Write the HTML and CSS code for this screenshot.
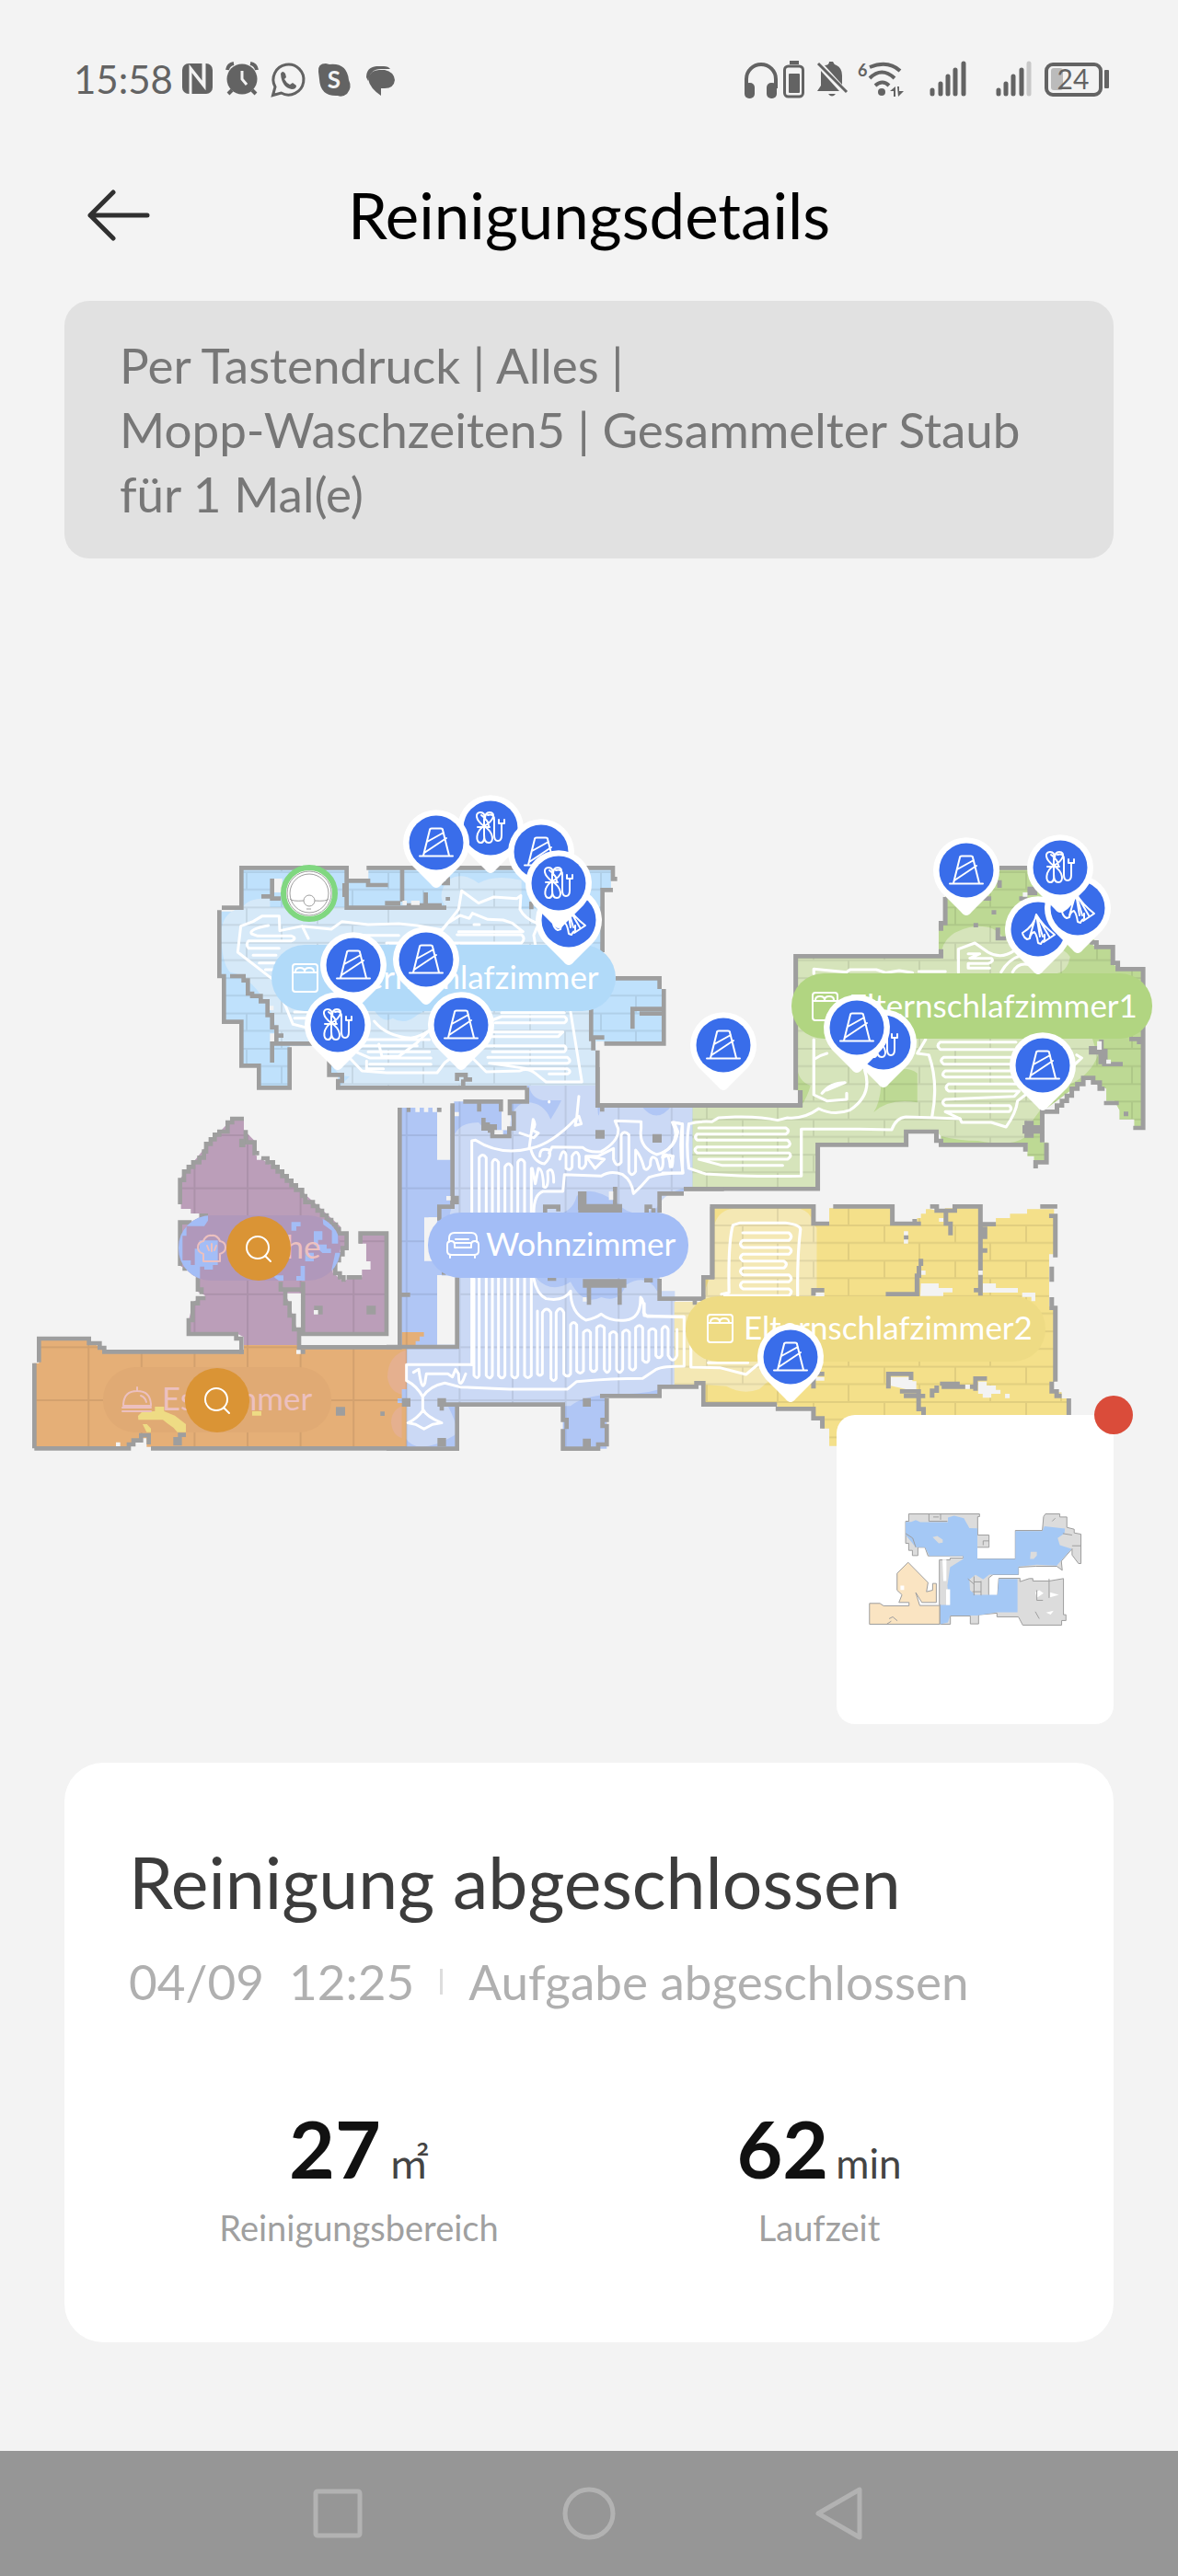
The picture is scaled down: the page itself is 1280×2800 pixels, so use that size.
FILE: index.html
```html
<!DOCTYPE html>
<html lang="de">

<head>
  <meta charset="UTF-8">
  <meta name="viewport" content="width=device-width, initial-scale=1">
  <title>Reinigungsdetails</title>
  <link rel="stylesheet" href="styles.css">
</head>

<body>
  <div class="status-bar">
    <span class="clock">15:58</span>
    <svg class="status-icons" width="236" height="44" viewBox="196 64 236 44">
      <!-- nfc -->
      <rect x="198" y="69" width="33" height="33" rx="7" />
      <path class="cut" d="M207 103V74L221 92V69M208 76L222 94V68" />
      <!-- alarm -->
      <circle cx="263" cy="86" r="16.5" />
      <path class="line" d="M247 76q1-6 7-7M279 76q-1-6-7-7M252 98l-4 4M274 98l4 4" />
      <path class="cut" d="M263 77v9l5 6" />
      <!-- whatsapp -->
      <path class="line thin" d="M296.500 103.500l2.500-9a16.500 16.500 0 1 1 6.500 6.500z" />
      <path d="M305 80q2-4 5 0l1 4-2 2q2 4 6 6l3-2 4 3q0 4-5 4-11-2-12-17z" />
      <!-- skype -->
      <path d="M346 78q-1-9 8-9l4 1q19-2 21 17 4 8-2 15-5 4-10 2-19 1-20-18z" />
      <text class="skype-s" x="363" y="96" text-anchor="middle">S</text>
      <!-- chat -->
      <path d="M398 84q0-11 11-12h8q5 0 7 3h-10q-12 0-14 13z" />
      <path d="M400 86q2-10 12-10h6q10 2 11 11-1 9-11 9h-4v8q-12-8-14-18z" />
    </svg>
    <svg class="status-icons status-right" width="400" height="44" viewBox="808 64 400 44">
      <!-- headphones -->
      <path class="line" d="M811 96V86a16 16 0 0 1 32 0v10" />
      <rect x="809" y="90" width="11" height="17" rx="5" />
      <rect x="833" y="90" width="11" height="17" rx="5" />
      <rect class="line thin" x="852.500" y="72" width="20" height="33" rx="4" />
      <rect x="857" y="80" width="12" height="21" rx="1" />
      <rect x="858" y="66" width="10" height="4" />
      <!-- muted bell -->
      <path d="M888 99l4-6V77l20 22zM896 71q5 0 5-4h4q1 3 4 4 6 3 6 11v10zM900 102h8q-4 5-8 0z" />
      <path class="line thin" d="M889 69l31 31" />
      <!-- wifi -->
      <text class="wifi-6" x="932" y="83">6</text>
      <path class="line" d="M945 73q20-8 33 4M945 85q13-13 27 0M951 93q8-7 15 0" />
      <circle cx="958" cy="100" r="4" />
      <path d="M967 99l6-5v11h-2v-6zM975 94h2v5h5l-6 6z" />
      <!-- signal 1 -->
      <path class="bars" d="M1013 98v4M1022 91v11M1030 83v19M1038 76v26M1047 69v33" />
      <!-- signal 2 -->
      <path class="bars" d="M1085 98v4M1093 91v11M1101 83v19M1110 76v26" />
      <path class="bars faint" d="M1118 69v33" />
      <!-- battery -->
      <rect class="charge" x="1142" y="74" width="13" height="24" rx="3" />
      <rect class="line" x="1137" y="70" width="59" height="33" rx="7" />
      <rect x="1200" y="76" width="5" height="20" rx="1" />
      <text class="battery-text" x="1166" y="97" text-anchor="middle">24</text>
    </svg>
  </div>

  <header class="header">
    <button class="back" type="button" aria-label="Zurück">
      <svg width="70" height="56" viewBox="94 206 70 56">
        <path d="M160 234L98 234M123 209L98 234l25 25" />
      </svg>
    </button>
    <h1>Reinigungsdetails</h1>
  </header>

  <main>
    <p class="note">Per Tastendruck | Alles |<br>Mopp-Waschzeiten5 | Gesammelter Staub<br>für 1 Mal(e)</p>

    <section class="map-area">
      <svg class="map" viewBox="0 607 1280 1309">
        <defs>
          <pattern id="bricks" x="36" y="947" width="77" height="38.400" patternUnits="userSpaceOnUse">
            <path class="joint" d="M0 1H77M0 20H77M1 0V19M39 20V39" />
          </pattern>
          <pattern id="tiles" x="268" y="1233" width="57.600" height="57.600" patternUnits="userSpaceOnUse">
            <path class="joint" d="M1 0V58M0 1H58" />
          </pattern>
          <clipPath id="clip-bricks">
            <use href="#floor-blue" transform="translate(220 860) scale(.3333)" />
            <use href="#floor-green" transform="translate(720 860) scale(.3571 .3333)" />
            <use href="#floor-yellow" transform="translate(700 1250) scale(.3571 .3333)" />
          </clipPath>
          <clipPath id="clip-tiles">
            <use href="#floor-living" transform="translate(420 1160) scale(.3333)" />
            <use href="#floor-kitchen" transform="translate(20 1180) scale(.3333)" />
            <use href="#floor-dining" transform="translate(20 1180) scale(.3333)" />
          </clipPath>
          <clipPath id="clip-kitchen-label">
            <rect x="194" y="1321" width="176" height="71" rx="35" />
          </clipPath>
          <g id="pin">
            <path class="pin-back" d="M0 49q-3 0-6-4L-27 24A36 36 0 1 1 27 24L6 45q-3 4-6 4z" />
            <circle class="pin-face" r="29.500" />
          </g>
          <g id="cone">
            <use href="#pin" />
            <path class="glyph" d="M-18 14.500H18M-14 14L-7-14q0-1.500 2-1.500H5q2 0 2 1.500L14 14M-10-1L8-11M-13 11L11-5" />
          </g>
          <g id="cable">
            <use href="#pin" />
            <path class="glyph" d="M-7-2C-17-9-17-17-11-17q5 0 5 7 0-7 5-7c7 0 5 9-6 15C-17 4-16 16-11 16q5 0 4-9 0 9 5 9c6 0 6-11-5-18M-14-1H-1M-10-14q8 6 8 12M-7-10V7M-3-14q7-2 7 5V8q0 6 4 6t4-6V-4M9-5h6M9-5v-4M15-5v-4" />
          </g>
          <g id="tent">
            <use href="#pin" />
            <path class="glyph" d="M-2-16Q-4-4-17 4q1 5 5 7l3-1q1-6 5-7 3 4 4 12l3 1Q6 10 6 14l12-8Q5-4-2-16zM-2-16L-9 8M-2-16L2 8M-2-16L5 8M-2-16L12 8M7 6v5" />
          </g>
          <g id="bed">
            <rect class="glyph" width="27" height="30" rx="3" />
            <path class="glyph" d="M0 9H27M3 8q0-4 5-4t5 4q0-4 5-4t5 4" />
          </g>
          <g id="search">
            <circle class="search-face" r="35" />
            <circle class="search-glass" cx="-1" cy="-1" r="12" />
            <path class="search-glass" d="M7 8l6 6" />
          </g>
        </defs>

        <!-- floors -->
        <g transform="translate(220 860) scale(.3333)">
          <path id="floor-blue" class="blue" d="M127 250H470V292H541V250H1332V322H1304V610H1490V645H1504V823H1310V815H1282V960H442V920H413V830H284V967H184V895H127V750H70V603H55V392H127z" />
          <path class="blue-clean" d="M62 450Q70 390 130 380Q150 345 220 350V378H795Q760 340 800 290Q850 260 900 300Q950 270 1040 290V385H1090Q1110 480 1190 520H1260V810H1282V960H820L850 935L880 960H450L480 930Q430 930 413 870V823H245Q240 730 200 680Q150 600 90 590Q60 560 62 450z" />
          <path class="blue" d="M560 715Q590 760 620 740Q660 765 700 730L735 712z" />
        </g>
        <g transform="translate(720 860) scale(.3571 .3333)">
          <path id="floor-green" class="green" d="M90 1030H419V975H405V538H840V430H860V250H1230V420L1320 490V508H1370V560L1385 580H1462V1098H1435V1070H1390V1040L1375 1010H1350V970L1325 960L1300 930L1155 1045V1145H1172V1210H1130V1190H1110V1150H847V1110H741V1153H472V1297H90z" />
          <path class="green-clean" d="M90 1030H419Q440 1000 450 960Q400 940 412 870V545H845Q850 450 960 440Q1020 440 1040 485Q1200 480 1240 540Q1230 600 1180 595H1260Q1300 800 1325 860Q1300 930 1230 960Q1130 1040 1100 1130Q1060 1160 960 1140Q900 1140 847 1125L835 1110H741V1153H472V1290H90z" />
          <path class="green" d="M665 960Q660 1020 642 1047Q690 1000 775 1015V920Q760 905 730 905z" />
        </g>
        <g transform="translate(420 1160) scale(.3333)">
          <path id="floor-living" class="living" d="M43 132H165V302H208V125H220V112H375V205H405V112H458V60H688V125H997V390H969V412H890V755H940V1035H890V1072H718V1244H575V1100H230V1244H50V910H43zM123 490V632H165V490zM165 678V905H230V678z" />
          <path class="living-clean" d="M465 60H688V125Q690 190 697 125H830Q880 190 930 125H997V390Q910 400 880 460Q800 500 750 440Q660 380 620 420Q600 500 490 475V690Q540 740 600 700Q640 780 700 750Q760 770 780 710Q850 670 882 730H940V1035Q850 1070 750 1065Q640 1070 600 1105H200Q240 1180 222 1200Q100 1270 62 1210L65 920H230V680H180V600L215 440V250Q220 180 300 180Q340 230 400 220Q400 130 450 115Q510 110 535 170Q560 130 570 108H510Q470 100 465 60z" />
        </g>
        <g transform="translate(700 1250) scale(.3571 .3333)">
          <path id="floor-yellow" class="yellow" d="M207 184H515V240H563V190H755V240H830V222H842V208H857V193H872L915 205V190H1025V240L1070 237V222H1113V208H1165V193H1247V340H1232V510H1250V755H1240V790H1270V810H1290V965H563V908H540V870H515V840H405V830H180V765H92V495H180V415H207z" />
          <path class="yellow-clean" d="M214 240Q230 195 270 192H475Q505 200 512 235L525 255V470H545V700Q430 700 350 780Q300 800 250 770L180 765H92V495H180Q185 430 214 400z" />
        </g>
        <g transform="translate(20 1180) scale(.3333)">
          <path id="floor-kitchen" class="kitchen" d="M697 108H735V145L770 180V225L850 275L930 350L1050 460V480H1070V530H1050L1025 570V610L1060 640L1080 625H1120V600H1148V573H1134V515H1110V480H1195V810H915V850H735V820L715 810H555V765L570 705L610 685L580 670V600L530 590V446H590V417H562V402H530V300L610 200z" />
          <path id="floor-dining" class="dining" d="M67 825H225L285 868H735V846H915V855H1265V1180H50V905H67z" />
          <path class="dining-clean" d="M1265 862Q1205 880 1203 950Q1210 1005 1265 1010zM1250 1045Q1215 1060 1215 1100Q1220 1140 1250 1150z" />
          <path class="living" d="M1250 990H1266V1035H1236V1020H1250z" />
          <path class="dining" d="M1250 804H1322V818H1308V833H1295V846H1250z" />
        </g>
        <rect fill="url(#bricks)" clip-path="url(#clip-bricks)" x="200" y="930" width="1080" height="650" />
        <rect fill="url(#tiles)" clip-path="url(#clip-tiles)" x="20" y="1170" width="760" height="410" />

        <!-- holes, walls and the driven route -->
        <g transform="translate(220 860) scale(.3333)">
          <path class="gap" d="M232 285h28v45h-28zM220 790h14v28h-14zM218 700h14v14h-14z" />
          <path class="wall" d="M63 380H127V250H470V380H795M535 250H1338V286H1352M1338 322H1304V525M470 292H540V306H605M651 250V360M595 365H645M665 372H780M728 330V365M800 280V300H780M55 388V603H70V752H127V895H184V967H284V835M90 603H134V617H148V660H162V668H190V685H212V705V730H227V770H241V830M241 797H264M220 823H360M227 830V885M413 870V925H455V945H442V967H1058M227 285V343H192M220 350H255M463 300V345M1347 610H1490V645M1504 645V823H1310M1402 775V710H1500M1425 725H1500M1267 710V815M1260 803H1310M1274 810V845M1288 845V1024H1560M830 945V925H858V940H879M850 940V970M800 345V357M1072 360V385" />
          <path class="gap" d="M652 357h14v14h-14zM680 357h28v14h-28z" />
          <path class="route" d="M335 770L295 760L250 650M225 610L115 525L125 440L165 425L195 407H250L252 455L325 440L420 450L455 425L540 435L640 432L700 438L780 452Q800 430 835 385L845 325L900 365L950 345L1025 350L1038 340L1035 385Q1050 415 1090 430M780 455L800 430L840 405L870 415L880 398L930 418L980 420L1010 430L1045 458H835M325 440L345 480" />
          <path class="route" d="M215 438Q150 450 160 465L180 472H290Q310 480 290 488H150Q140 500 150 512H250M165 535H240M185 560H235M205 582H230M830 468H1040Q1055 480 1040 495H600M1085 500L1080 470L1090 445M525 470H640M885 435h18" />
          <path class="route" d="M1200 720L1237 948H1120L1085 920Q1060 900 1035 912L925 915Q900 890 880 870M975 722H1180M935 750L975 735H1180Q1195 745 1180 755H955M950 785H1175L1160 800H930M900 830H1180Q1190 840 1180 850H945M930 868H1190Q1205 880 1190 887H935L1060 905H1190Q1205 915 1190 922H1130" />
          <path class="route" d="M480 870L520 912L600 918H765L790 885L810 870M520 810H740M560 750Q600 800 680 805Q710 800 740 780M515 830H700M540 850H740M575 825L585 865H640L700 820L740 780M500 850L545 870H745M535 880V905H590M545 890H745M300 720H350M300 740H340" />
        </g>
        <g transform="translate(720 860) scale(.3571 .3333)">
          <path class="gap" d="M1310 490h14v14h-14z" />
          <path class="wall" d="M405 974V538H847V515M847 455V430H860V345M1025 250H1110M419 975V1024H0M65 1297H472V1153H741V1110H833V1140H847V1153H1104V1175M1155 1145V1045H1200V1025H1215V1010H1230V993H1245V970H1262V955H1280V935H1310V950H1330V970H1345M1350 1010V1017H1388M1410 1045V1060M1168 1147V1210H1135V1230M1300 493H1320V508H1370V560H1385V580H1462V1098H1432M1020 445V480H1045M1025 290V315M975 350H1000M1085 350H1110M1008 388v14M953 430v14M1337 890H1400M1335 810V870M1420 808H1450V825" />
          <path class="wall wide" d="M1095 1103H1155M1115 1075V1130M1110 325H1140M1297 845H1330M1340 840V890" />
          <path class="gap" d="M1322 815h14v28h-14zM1350 875h14v14h-14zM1096 330h14v14h-14z" />
          <path class="route" d="M110 1098H375Q390 1108 375 1118H105Q95 1128 105 1138H380Q395 1150 380 1160H105Q92 1170 105 1180H385Q395 1190 380 1200H110L180 1220H365M80 1085Q70 1150 80 1230L130 1248Q260 1258 422 1255V1102H600L697 1104Q710 1065 740 1062L905 1068L910 1080L1000 1080L1045 1095Q1075 1050 1080 1010L1110 985M80 1085Q110 1075 150 1078L170 1065L220 1062Q300 1060 350 1073L380 1065Q430 1070 475 1035Q520 1060 570 1040Q640 990 615 910" />
          <path class="route" d="M460 595V580L560 590L570 582H650L680 592L720 585L760 592M780 588H860M460 810V990L500 1010L560 1005V985M485 985Q510 950 555 950L500 975M460 875Q480 860 500 855M900 590V515L950 495L990 525Q1030 550 1070 520M930 530H965L935 545H1000Q1010 555 990 562H930V577H995M1030 590Q1050 550 1090 535M1065 590Q1080 560 1110 565" />
          <path class="route" d="M1075 818H845Q830 830 845 842H1070M1070 868H855Q840 878 855 890H1060M1065 912H860Q845 925 860 932H1075M1080 955H870Q855 965 870 978H1085L1070 995L860 1005Q845 1015 860 1025H1055Q1065 1035 1055 1045H860L905 1068M820 1060Q840 950 810 860L775 855L800 810M1260 860L1275 870L1255 890M30 1080L60 1085Q50 1160 62 1245H0M30 1080Q60 1140 0 1180M0 1195Q40 1170 28 1225" />
        </g>
        <g transform="translate(420 1160) scale(.3333)">
          <path class="gap" d="M375 145h28v60h-28zM94 132h14v14h-14zM122 132h14v14h-14zM150 132h14v14h-14z" />
          <path class="wall" d="M458 67V112H402V150H415V200H400V225H345V205M43 132V910M215 118V455H172V500M250 112H373V145M302 112V145M316 165V200H330V180M688 0V125H1348V75M703 130v15M66 139h12M165 139h14M890 475V412H969M969 397H1100M890 690V755H1033V685H1062V455M1005 755v20M696 1072H890V1042H1010V1030H1033V1100H1270M718 1080V1150H704V1170H718V1230H690V1244H575V1180M587 1180V1150H575V1100H180V1120M230 1100V1244H0M0 912H230V685M50 742H77M745 390V460M517 475V455H560V470M848 475V455H866M870 460V475M660 710V775M760 710V775M525 690h28M840 695h28M180 670h14" />
          <path class="wall wide" d="M638 405V465M625 460H768M640 705H782M640 1093h26M166 1093h28M50 1093h28M166 1223h28M640 1225h26M208 433h28M681 219h30M867 232h30M330 200H360" />
          <path class="gap" d="M137 490h28v115h-28zM725 405h14v28h-14zM640 750h12v14h-12zM195 420h14v14h-14zM222 146h14v14h-14zM352 205h28v14h-28z" />
          <path class="route" d="M278 970V240L290 238Q370 290 470 265M285 690V1005Q296 1020 302 1005V295Q313 278 325 295V1005Q336 1022 345 1005V310Q353 292 365 310V1005Q378 1022 386 1005V325Q398 305 408 325V1005Q418 1022 428 1005V310Q438 292 450 310V1005Q460 1020 472 1005V330" />
          <path class="route" d="M492 795V1000Q500 1010 508 1000V800Q522 778 536 800V1015Q545 1030 553 1015V800Q566 775 578 800V1000Q590 1015 600 1000V840Q610 825 620 840V990Q632 1005 642 990V865Q655 850 665 865V985Q675 1000 685 985V850Q697 835 710 850V985Q720 1005 728 985V870Q740 855 750 870V985Q760 1005 770 985V865Q782 850 792 865V980Q803 995 812 980V850Q825 835 835 850V955Q848 970 855 955V860Q868 845 878 860V940Q888 955 898 940V855Q908 835 918 855V940Q935 970 947 940V855" />
          <path class="route" d="M480 690Q490 740 520 755Q580 765 600 730Q600 800 650 825Q680 820 700 805Q730 830 780 825Q830 820 828 750Q840 760 838 800L850 813H970V975Q900 975 880 985L835 1015Q740 1015 620 1025L590 1050H400L240 1043L190 1030Q140 1040 118 1075V1120Q100 1145 70 1160L95 1165L122 1180L150 1165L180 1160Q130 1140 118 1115M118 1075Q100 1040 65 1022V970H280M88 995L105 985Q115 1060 125 1030L130 1000H200L215 1010L225 985L235 1000Q235 1050 250 1020L258 1000" />
          <path class="route" d="M470 265Q540 250 620 165L627 95M620 165L615 190L635 185L627 160M465 265L478 170Q490 190 475 205L495 215L480 230L435 215M470 265Q480 310 515 315Q540 290 530 270Q500 260 500 290M530 280L540 260L640 262Q660 280 700 275Q760 240 755 200L745 175L830 178V200Q820 260 880 285Q940 270 950 210L937 180L965 185V345Q890 345 855 360Q830 390 805 412Q800 370 770 350Q730 335 700 355L580 350L575 405L510 405Q480 415 480 475M530 112v2" />
          <path class="route" d="M565 300Q575 260 585 285V330Q600 340 605 325V290Q620 265 628 290V325Q640 340 650 315V290L680 330L710 300L650 290L690 290L740 265V300Q750 330 765 310V220Q775 205 790 220V340Q800 360 812 340V270Q830 290 840 330Q850 340 860 320Q860 280 880 300L890 335Q905 335 900 290Q920 270 925 325L935 290M475 330L485 380L495 330Q510 330 512 390Q530 400 525 340Q545 320 545 375" />
        </g>
        <g transform="translate(700 1250) scale(.3571 .3333)">
          <path class="gap" d="M790 265h13v40h-13zM842 435h54v15h42v14h-28v12h-70zM1030 435h40v15h67v15h53v28h-12v-14h-28v-14h-120zM750 740h66v14h12v25l-14 14-20-14-44-10zM1016 755h26v13h28v14h14v13h-28v13h-26v-13h-14zM843 393h13v14h-13zM1098 795h14v14h-14zM520 465h28v12h-28zM520 740h28v12h-28zM897 222h14v12h-14z" />
          <path class="wall" d="M207 420V184H515V240H563M575 184H755V240H842M823 225V240M870 184H890V198H945V184H1023V475M918 205V240H932V278M1205 184H1257M1232 215H1251V350M1240 380V430M1240 480V515H1251V755M1240 755V787H1255V802H1270M1292 810V870M1030 242H1070M1037 250V290M1037 320v15M842 355V378M836 378V410H830V470H735M515 475V457H548M1003 457H1020M743 778V730H812V750M515 730H548M515 740V778M778 787H835V845H850V870M790 802H855M876 808V785H890V768M900 762H960M905 772H977M990 772H1008V745H1043M1008 745V785M797 278v14M400 844H515V875H542V908M404 830H180" />
          <path class="gap" d="M1017 393h13v14h-13zM977 765h14v14h-14z" />
          <path class="route" d="M235 470L258 465Q255 300 270 245L290 238H430Q480 245 475 262Q465 350 467 475M300 270H440Q455 282 440 295H300Q285 305 300 318H440Q455 328 440 340H300Q285 350 300 362H425Q440 372 425 385H300Q285 395 300 407H440Q455 420 440 430H300Q285 440 300 453H440Q455 462 440 475H245M0 500V540L120 545M142 640V708L230 710L310 732L345 700M195 694H315" />
        </g>
        <g transform="translate(20 1180) scale(.3333)">
          <path class="gap" d="M876 677h45v112h-15l-12-40-10-40-8-15zM360 1190v-20l45-20h13v28h14v20h-72zM318 1163h14v13h-14z" />
          <path class="wall" d="M527 387V308H540V280H555V265H570V250H590V235H605V215H612V190H627V175H640V160H655V150H682V120H697V108H735M741 145V185H770V220H785M792 237H812V250H830V265H845V280H860V295H875V310H890V325H905V340H925V360H935V380H960V393H975V408H990V423H1005V438H1020V453H1035V468H1045V482H1070V530H1057V550H1045V570H1033V612H1048V625H1060V640M1070 625H1120M1115 515V482H1200V810H928V640M855 640V665H930M870 665V710H884V750H898V795H915V868M727 875V825H710V810H555V765H568V710H585V693H610M597 680V665H585V625M590 424H618M565 446H527V588M535 597H550" />
          <path class="wall" d="M52 1183V905M67 902V825H230V840H265V855H280V868H735M52 1183H360V1170H375V1157H400V1140H425V1170M432 1183H1265M915 853H1250M1180 1070h14M546 1139H520M921 868H935" />
          <path class="wall wide" d="M1035 1062h30M964 732h28M1135 732h30M505 1160h28M720 187h20" />
          <path class="gap" d="M963 732h14v14h-14zM777 230h14v12h-14zM906 862h14v13h-14z" />
        </g>

        <!-- room labels -->
        <rect class="label-blue" x="295" y="1027" width="374" height="72" rx="36" />
        <use href="#bed" x="318" y="1048" />
        <text class="room" x="357" y="1075">Elternschlafzimmer</text>

        <rect class="label-green" x="860" y="1058" width="392" height="71" rx="35" />
        <use href="#bed" x="883" y="1079" />
        <text class="room" x="922" y="1106">Elternschlafzimmer1</text>

        <rect class="label-yellow" x="745" y="1409" width="391" height="71" rx="35" />
        <use href="#bed" x="769" y="1429" />
        <text class="room" x="808" y="1456">Elternschlafzimmer2</text>

        <rect class="label-living" x="465" y="1318" width="283" height="71" rx="35" />
        <path class="glyph" d="M488 1350v-4q0-6 6-6h18q6 0 6 6v4M491 1364q-5 0-5-4v-7q0-4 4-4t4 4v3h18v-3q0-4 4-4t4 4v7q0 4-5 4zM495 1347h14M494 1351h18M489 1365v2M516 1365v2" />
        <text class="room" x="528" y="1365">Wohnzimmer</text>

        <rect class="label-kitchen" x="194" y="1321" width="176" height="71" rx="35" />
        <g clip-path="url(#clip-kitchen-label)">
          <path class="label-living" transform="translate(20 1180) scale(.3333)" d="M522 420H618V440L606 458H548V490H535V570H562V585H575V532H590V505H650V585H634V600H606V590H592V636H522zM890 445h30v14h-14v14h-16zM963 475h28v28h-14v15h28v14h14v14h-28l-28-28zM935 545h28v28h-28zM835 619h29v17h-15l-14-10zM920 588h14v48h-28v-15h14zM992 435h50v80h-20v-42l-28-20zM1033 545h20v90h-60l27-30z" />
        </g>
        <path class="glyph pink" d="M221 1371v-8q-6-2-6-7 0-6 6-7 3-7 9-6 6-1 9 6 6 1 6 7 0 5-6 7v8zM225 1354l2 5M230 1352v8M235 1354l-2 5" />
        <text class="room pink-text" x="252" y="1368">Küche</text>
        <use href="#search" x="281" y="1357" />

        <rect class="label-dining" x="112" y="1486" width="248" height="71" rx="35" />
        <path class="label-yellow" transform="translate(20 1180) scale(.3333)" d="M390 1077l15-15h40v-15h30v15l35 14 36 28v26h-28l-12-14-20-14-15-12h-80zM405 1104h14l13 14v12h-14zM762 1062h30v14h-30z" />
        <path class="glyph pink" d="M133 1530h31M133 1534h31M134 1528q0-16 15-16t15 16zM149 1512v-4M153 1517q5 2 6 7" />
        <text class="room pink-text" x="176" y="1533">Esszimmer</text>
        <use href="#search" x="236" y="1522" />

        <!-- docking station -->
        <circle class="dock" cx="336" cy="971" r="28" />
        <circle class="dock-line" cx="336" cy="971" r="24" />
        <circle class="dock-line" cx="336" cy="971" r="21" />
        <path class="dock-line" d="M315 977q2 3 15 2M342 979q13 1 15-2M333 988h5" />
        <circle class="dock-line" cx="336" cy="979" r="6" />

        <!-- obstacles -->
        <use href="#cable" x="533" y="900" />
        <use href="#cone" x="474" y="916" />
        <use href="#cone" x="588" y="926" />
        <use href="#tent" x="618" y="1000" />
        <use href="#cable" x="607" y="960" />
        <use href="#cone" x="384" y="1049" />
        <use href="#cone" x="463" y="1043" />
        <use href="#cable" x="367" y="1114" />
        <use href="#cone" x="501" y="1114" />
        <use href="#cone" x="786" y="1136" />
        <use href="#cone" x="1050" y="946" />
        <use href="#tent" x="1128" y="1010" />
        <use href="#tent" x="1171" y="987" />
        <use href="#cable" x="1152" y="943" />
        <use href="#cable" x="960" y="1133" />
        <use href="#cone" x="931" y="1117" />
        <use href="#cone" x="1133" y="1158" />
        <use href="#cone" x="859" y="1475" />
      </svg>

      <div class="mini-map">
        <svg viewBox="87 113 903 1009">
          <path class="mini-room" d="M322 436H553V445H547V505H584V545H541V583H670V490H758L762 445L768 436H815V446H838V480L862 486V498L884 502V598H876L855 570V550L820 590L823 620L805 607H737L680 610V634H597L583 645V703H612L616 646H685V657L715 647H727V655H780L827 647V765H835V784H821V799H694L680 772H610V760L550 765V795H523V769H458V796H425V733H422V586H457V580H500V573H385L375 545H352V572H334V555H322V532H312V460H322z" />
          <path class="mini-cleaned" d="M312 462H330L345 456L360 463H450V448L470 442L502 450L520 482L546 483V583H670V492H758L765 476L832 484L830 500L808 515L815 538L853 550L805 605L740 602L680 608V634H585L565 650L540 635L520 650L522 685L540 700H612L616 648H677V757H610L545 768H457L450 790L425 796V733H456L448 670L457 610L500 583V573H390L375 545H345L312 505z" />
          <path class="mini-orange" d="M194 728H228L240 736H323V725H290L300 700L284 685V630L320 594L385 660L380 690L400 685V663H412V725H365L345 693L358 735H423V796H194z" />
          <path class="mini-room flat" d="M400 512L415 508L433 520V530L420 532zM720 560H740V572L730 583H718z" />
          <path class="mini-gap" d="M432 585H445V655H435zM444 682H457V733H444zM735 692L748 685L762 695L740 710zM783 692L812 700L783 708zM770 758L795 752L785 765zM295 670h12v14h-12z" />
          <path class="mini-wall" d="M388 436V460H448M402 446H420M426 436V455M312 500L335 515L345 545M565 538V524H584M535 640V702M558 655V702M535 658H558M530 690H558M515 648L535 665M780 648V710M740 685V718H760M735 755L748 778M790 460L800 450M825 500L855 505M855 540L884 540M258 778L270 772L285 785M250 796L265 786" />
        </svg>
        <span class="badge"></span>
      </div>
    </section>

    <section class="summary">
      <h2>Reinigung abgeschlossen</h2>
      <p class="meta"><span>04/09&nbsp; 12:25</span><span class="divider"></span><span>Aufgabe abgeschlossen</span></p>
      <dl class="stats">
        <div class="stat">
          <dt>Reinigungsbereich</dt>
          <dd>27<span class="unit">㎡</span></dd>
        </div>
        <div class="stat">
          <dt>Laufzeit</dt>
          <dd>62<span class="unit">min</span></dd>
        </div>
      </dl>
    </section>
  </main>

  <nav class="nav-bar">
    <button type="button" aria-label="Letzte Apps"><svg width="64" height="64"><rect x="8" y="8" width="48" height="48" rx="2" /></svg></button>
    <button type="button" aria-label="Startseite"><svg width="64" height="64"><circle cx="32" cy="32" r="26" /></svg></button>
    <button type="button" aria-label="Zurück"><svg width="64" height="64"><path d="M53 6V58L8 32z" /></svg></button>
  </nav>
</body>

</html>
```
FILE: styles.css
```css
* {
  box-sizing: border-box;
}

body {
  margin: 0;
  min-height: 100vh;
  display: flex;
  flex-direction: column;
  background: #f3f3f3;
  font-family: Lato, "Noto Sans CJK SC", sans-serif;
}

h1,
h2,
p,
dl,
dd {
  margin: 0;
  font-weight: normal;
}

button {
  border: 0;
  padding: 0;
  background: none;
}

/* status bar */
.status-bar {
  display: flex;
  align-items: center;
  gap: 12px;
  padding: 64px 72px 48px 80px;
}

.clock {
  width: 104px;
  font-size: 42px;
  line-height: 44px;
  color: #636363;
}

.status-icons {
  fill: #636363;
}

.status-right {
  margin-left: auto;
}

.line {
  fill: none;
  stroke: #636363;
  stroke-width: 4;
}

.thin {
  stroke-width: 3;
}

.cut {
  fill: none;
  stroke: #f3f3f3;
  stroke-width: 3;
}

.bars {
  fill: none;
  stroke: #636363;
  stroke-width: 5;
  stroke-linecap: round;
}

.faint {
  stroke: #c8c8c8;
}

.charge {
  fill: #bbb;
}

.skype-s {
  fill: #f3f3f3;
  font-size: 26px;
  font-weight: bold;
}

.wifi-6 {
  font-size: 18px;
  font-weight: bold;
}

.battery-text {
  font-size: 30px;
}

/* header */
.header {
  position: relative;
  display: flex;
  align-items: center;
  justify-content: center;
  height: 156px;
}

.header h1 {
  font-size: 69px;
  line-height: 80px;
  color: #000;
}

.back {
  position: absolute;
  left: 94px;
  height: 56px;
}

.back path {
  fill: none;
  stroke: #303030;
  stroke-width: 5;
  stroke-linecap: round;
  stroke-linejoin: round;
}

.note {
  margin: 15px 70px 0;
  padding: 35px 60px;
  border-radius: 27px;
  background: #e1e1e1;
  color: #777;
  font-size: 53px;
  line-height: 70px;
}

/* map */
.map-area {
  position: relative;
}

.map {
  display: block;
  width: 100%;
}

.blue { fill: #bfe1fc; }
.blue-clean { fill: #d6e9f8; }
.green { fill: #bdd994; }
.green-clean { fill: #d6e4bb; }
.living { fill: #b0c6f5; }
.living-clean { fill: #cbd9f5; }
.yellow { fill: #f4e08a; }
.yellow-clean { fill: #f4e8b4; }
.kitchen { fill: #bb9eb9; }
.dining { fill: #e5af77; }
.dining-clean { fill: #e5b08f; }
.gap { fill: #f3f3f3; }

.living {
  fill-rule: evenodd;
  clip-rule: evenodd;
}

.joint {
  fill: none;
  stroke: #000;
  stroke-opacity: 0.08;
  stroke-width: 2;
}

.wall {
  fill: none;
  stroke: #9e9e9e;
  stroke-width: 14;
}

.wide {
  stroke-width: 28;
}

.route {
  fill: none;
  stroke: #fff;
  stroke-width: 9;
  stroke-linecap: round;
  stroke-linejoin: round;
}

.label-blue { fill: #b1daf9; }
.label-green { fill: #b1d581; }
.label-yellow { fill: #eedb84; }
.label-living { fill: #a3bdf6; }
.label-kitchen { fill: #b098bb; }
.label-dining { fill: #e0aa74; }

.room {
  fill: #fff;
  font-size: 35px;
}

.pink-text {
  fill: #ecc0bf;
}

.glyph {
  fill: none;
  stroke: #fff;
  stroke-width: 2;
  stroke-linecap: round;
  stroke-linejoin: round;
}

.pink {
  stroke: #ecc0bf;
}

.pin-back {
  fill: #fff;
}

.pin-face {
  fill: #396dea;
}

.search-face {
  fill: #da9435;
}

.search-glass {
  fill: none;
  stroke: #fff;
  stroke-width: 2;
  stroke-linecap: round;
}

.dock {
  fill: #fff;
  stroke: #80d780;
  stroke-width: 6;
}

.dock-line {
  fill: none;
  stroke: #9e9e9e;
  stroke-width: 1;
}

.mini-map {
  position: absolute;
  right: 70px;
  bottom: 42px;
  width: 301px;
  height: 336px;
  border-radius: 20px;
  background: #fff;
}

.mini-map svg {
  display: block;
  width: 100%;
  height: 100%;
}

.mini-room {
  fill: #dcdcdc;
  stroke: #9e9e9e;
  stroke-width: 3;
}

.flat {
  stroke: none;
}

.mini-cleaned {
  fill: #a4c8f5;
}

.mini-orange {
  fill: #fae4c2;
  stroke: #9e9e9e;
  stroke-width: 3;
}

.mini-gap {
  fill: #fff;
}

.mini-wall {
  fill: none;
  stroke: #9e9e9e;
  stroke-width: 3;
}

.badge {
  position: absolute;
  top: -21px;
  right: -21px;
  width: 42px;
  height: 42px;
  border-radius: 50%;
  background: #da4c3a;
}

/* summary card */
.summary {
  margin: 0 70px;
  padding: 84px 70px 100px;
  border-radius: 42px;
  background: #fff;
}

.summary h2 {
  font-size: 77px;
  line-height: 90px;
  color: #3c3c3c;
}

.meta {
  display: flex;
  align-items: center;
  margin-top: 34px;
  font-size: 53px;
  line-height: 60px;
  color: #b0b0b0;
}

.divider {
  width: 3px;
  height: 28px;
  margin: 0 28px;
  background: #ddd;
}

.stats {
  display: flex;
  margin-top: 106px;
}

.stat {
  flex: 1;
  display: flex;
  flex-direction: column-reverse;
  gap: 16px;
  text-align: center;
}

.stat dt {
  font-size: 38px;
  line-height: 50px;
  color: #a0a0a0;
}

.stat dd {
  font-size: 86px;
  font-weight: bold;
  line-height: 90px;
  color: #111;
}

.unit {
  margin-left: 8px;
  font-size: 44px;
  font-weight: normal;
  line-height: 44px;
  color: #444;
}

/* system navigation */
.nav-bar {
  display: flex;
  align-items: center;
  justify-content: center;
  gap: 209px;
  height: 136px;
  margin-top: auto;
  background: #969696;
}

.nav-bar button {
  height: 64px;
}

.nav-bar svg {
  fill: none;
  stroke: #b2b2b2;
  stroke-width: 5;
  stroke-linejoin: round;
}
```
